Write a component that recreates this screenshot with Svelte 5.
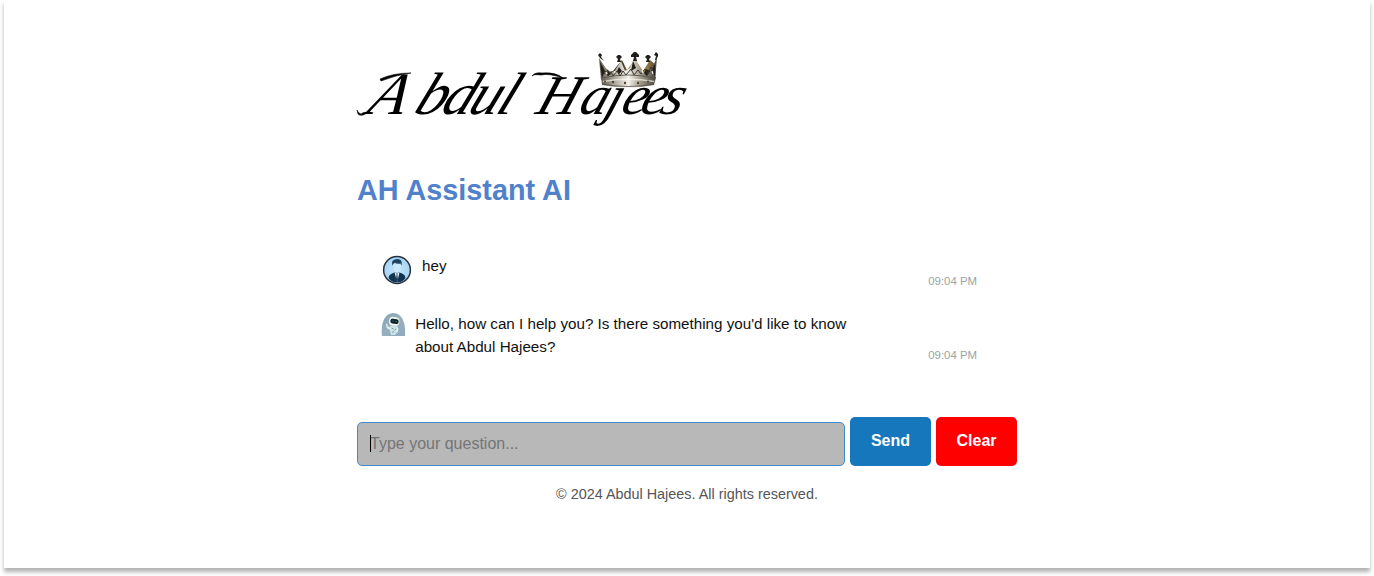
<script>
  const messages = [
    { who: 'user', text: 'hey', time: '09:04 PM' },
    {
      who: 'bot',
      text: "Hello, how can I help you? Is there something you'd like to know about Abdul Hajees?",
      time: '09:04 PM'
    }
  ];
  let question = '';
</script>

<main class="page">
  <div class="column">
    <svg class="logo" viewBox="0 0 330 90" width="330" height="90" role="img" aria-label="Abdul Hajees">
      <defs>
        <linearGradient id="silver" x1="0" x2="1">
          <stop offset="0" stop-color="#625c51" />
          <stop offset=".3" stop-color="#bbb7ac" />
          <stop offset=".5" stop-color="#f3f1eb" />
          <stop offset=".72" stop-color="#a09a8c" />
          <stop offset="1" stop-color="#4a453d" />
        </linearGradient>
        <linearGradient id="gold" x1="0" x2="1">
          <stop offset="0" stop-color="#211c15" />
          <stop offset=".4" stop-color="#3f3420" />
          <stop offset=".55" stop-color="#c1a76b" />
          <stop offset=".8" stop-color="#9c824c" />
          <stop offset="1" stop-color="#5a4c32" />
        </linearGradient>
      </defs>
      <g class="script">
        <text transform="translate(0 67) skewX(-23)" x="8 55 82 109 137" font-size="60">Abdul</text>
        <text transform="translate(0 67) skewX(-19)" x="177 220 246 262 281 301" font-size="56">Hajees</text>
      </g>
      <g class="swash">
        <path d="M0 63Q2 69 10 66Q4 70 1 67Z" />
        <path d="M23 32Q36 26 54 26Q39 28 24 34Z" />
        <path d="M175 29Q178 25 185 26Q199 25 206 31Q192 26 184 28Q177 27 175 29Z" />
      </g>
      <g>
        <path d="M245 17L251 24L256 24L265 13L270 23L278 12L286 24L293 13L299 18L298 33Q271 38 244 32Z" fill="url(#gold)" />
        <path d="M242 11L250 23L257 25L264 14L268 24L273 21L278 11L284 23L290 26L296 19L300 10L298 34Q271 28 244 33Z" fill="url(#silver)" />
        <path d="M244 30Q271 23 299 30L297 38Q271 43 245 38Z" fill="url(#silver)" />
        <path d="M245 31Q271 25 298 31M245 37Q271 42 297 37" fill="none" stroke="#554f42" stroke-width=".8" />
        <path d="M246 34.5Q271 30 297 34.5" fill="none" stroke="#fffdf4" stroke-width="1.3" opacity=".65" />
        <g fill="#211e19">
          <path d="M241 8l2-2 2 2-1 2 3 4-4-3z" />
          <path d="M259 10l2-2h2l2 2-2 2 1 3h-4l1-3z" />
          <path d="M274 8l3-3h2l3 3v2h-3l1 4h-4l1-4h-3z" />
          <path d="M288 10l2-2h2l2 2-2 2 1 3h-4l1-3z" />
          <path d="M297 8l2-3 2 2v2l-2 4h-1l1-4z" />
          <path d="M243 15l5 9-3 7zM250 22l4 5-3 2zM262 20l3 4-3 3-2-3zM276 14l3 7-5 3zM289 22l4 2-3 5-3-3zM298 17v12l-4-5z" />
        </g>
        <path d="M247 27l2-3 2 5 3-4 2 4 4-5 3 5 3-5 3 4 5-6 3 6 4-5 3 4 4-5 3 5 3-7 3 5" fill="none" stroke="#3a362d" stroke-width="1" />
        <path d="M249 25l1 2M257 24l1 2M268 24l1 2M285 23l1 3M295 24l1 3" stroke="#f3efe4" stroke-width="1.3" />
        <g fill="#51452d">
          <circle cx="248" cy="34.5" r="1" /><circle cx="256" cy="35" r="1.2" />
          <circle cx="268" cy="36" r="1.2" /><circle cx="281" cy="36" r="1.2" />
          <circle cx="291" cy="34.5" r="1.1" />
        </g>
      </g>
    </svg>

    <h1>AH Assistant AI</h1>

    <section class="chat">
      {#each messages as message}
        <article class="message {message.who}">
          {#if message.who === 'user'}
            <svg class="avatar" viewBox="0 0 30 30" aria-hidden="true">
              <defs>
                <radialGradient id="sky"><stop offset="0" stop-color="#c8e7fc" /><stop offset="1" stop-color="#a5d3f5" /></radialGradient>
                <clipPath id="round"><circle cx="15" cy="15" r="12.7" /></clipPath>
              </defs>
              <circle cx="15" cy="15" r="13.4" fill="url(#sky)" stroke="#26323c" stroke-width="1.5" />
              <g clip-path="url(#round)">
                <path d="M6.5 23q.3-3.3 3-4.2l3.5-1.5 2 .7 2-.7 3.5 1.5q2.7.9 3 4.2-3 4.5-8.5 4.5T6.5 23z" fill="#123450" />
                <path d="M12.5 17.3l2.5.8 2.5-.8L15.2 27z" fill="#eef8fd" />
                <path d="M14.4 18h1.2l-.2 1.5.6 5.5-1 2-1-2 .6-5.5z" fill="#183b5c" />
                <path d="M11 9q0 7.5 4 8.4 4-.9 4-8.4l-2.5-1-3 .5z" fill="#c9e9fc" />
                <path d="M10.5 10.8Q9.2 6 11.7 4.9q3.4-1.8 6.6-.2 2.2 1.8 1.1 6.1l-.9-2.4q-3.5.7-5.6-.6l-1.5 1z" fill="#1d435f" />
              </g>
            </svg>
          {:else}
            <svg class="avatar" viewBox="0 0 24 24" aria-hidden="true">
              <defs>
                <linearGradient id="arch" x2="1" y2="1"><stop offset="0" stop-color="#7fa4af" /><stop offset=".5" stop-color="#98afbf" /><stop offset="1" stop-color="#91a9c1" /></linearGradient>
              </defs>
              <path d="M1 24Q.2 17 1.5 11.5Q4.3 1 12.5 1T23.2 11.5Q24.5 17 24 24z" fill="url(#arch)" />
              <path d="M9 13.5l7 1 .5 5L14 23h-4l-1-4z" fill="#cee5e7" />
              <path d="M8.8 18l-3-2-1-4 1.2-.5 1 3 3 1.5M16 14l1.5 3-.8 4-2-4" fill="#e3f0ef" />
              <rect x="8" y="5" width="10.5" height="8.7" rx="4" transform="rotate(8 13 9)" fill="#f1f5ee" />
              <rect x="9.4" y="6.8" width="8.3" height="4.9" rx="2.2" transform="rotate(8 13 9)" fill="#10242b" />
              <circle cx="12" cy="9" r=".6" fill="#3e8b94" /><circle cx="15.3" cy="9.5" r=".6" fill="#3e8b94" />
              <path d="M10.5 16l2 1m1 1l2-1m-4 4l1-2" stroke="#66848b" stroke-width=".8" />
            </svg>
          {/if}
          <p>{message.text}</p>
          <time>{message.time}</time>
        </article>
      {/each}
    </section>

    <form on:submit|preventDefault>
      <div class="field">
        <input bind:value={question} placeholder="Type your question..." aria-label="Question" />
        <span class="caret"></span>
      </div>
      <button class="send">Send</button>
      <button class="clear" type="button" on:click={() => (question = '')}>Clear</button>
    </form>

    <footer>© 2024 Abdul Hajees. All rights reserved.</footer>
  </div>
</main>

<style>
  :global(body) { background: #fff; }
  :global(#app) { min-height: 576px; }
  .page {
    box-sizing: border-box;
    width: 1366px;
    height: 568px;
    margin: 0 auto;
    padding-top: 47px;
    background: #fff;
    box-shadow: 0 4px 4px rgba(0, 0, 0, .3);
    font-family: "Liberation Sans", Arial, sans-serif;
  }
  .column { width: 660px; margin: 0 auto; }
  .logo { display: block; overflow: visible; }
  .script {
    fill: #000;
    font-family: "Liberation Serif", serif;
    font-style: italic;
  }
  .swash { fill: #000; stroke: #000; stroke-width: .6; }
  h1 {
    margin: 36px 0 0;
    color: #5081cb;
    font-size: 28.8px;
    line-height: 34px;
  }
  .chat { padding: 48px 40px 0 25px; height: 162px; }
  .message { display: flex; align-items: flex-start; color: #111; }
  .message p { margin: -1px 0 0; width: 440px; font-size: 15.2px; line-height: 23px; }
  .avatar { flex: none; }
  time {
    margin-left: auto;
    align-self: flex-end;
    color: #9aa5a5;
    font-size: 11.4px;
    line-height: 13px;
  }
  .user { height: 33px; }
  .user .avatar { width: 30px; height: 30px; margin-right: 10px; }
  .bot { height: 49px; margin-top: 25px; }
  .bot .avatar { width: 24px; height: 24px; margin: -1px 10.2px 0 -1px; }
  form { display: flex; align-items: flex-end; gap: 5px; height: 49px; }
  .field { position: relative; width: 488px; height: 44px; }
  input {
    box-sizing: border-box;
    display: block;
    width: 100%;
    height: 44px;
    padding: 0 12px;
    border: 1px solid #428bca;
    border-radius: 5px;
    outline: 0;
    background: #b8b8b8;
    color: #111;
    font: 16px "Liberation Sans", Arial, sans-serif;
  }
  input::placeholder { color: #757575; opacity: 1; }
  .caret { position: absolute; left: 13px; top: 13px; width: 1px; height: 17px; background: #000; }
  button {
    width: 81px;
    height: 49px;
    padding: 0 0 2px;
    border: 0;
    border-radius: 5px;
    color: #fff;
    font: bold 16px "Liberation Sans", Arial, sans-serif;
  }
  .send { background: #1777bd; }
  .clear { background: #f00; }
  footer { margin-top: 20px; text-align: center; color: #555; font-size: 14.4px; line-height: 17px; }
</style>
